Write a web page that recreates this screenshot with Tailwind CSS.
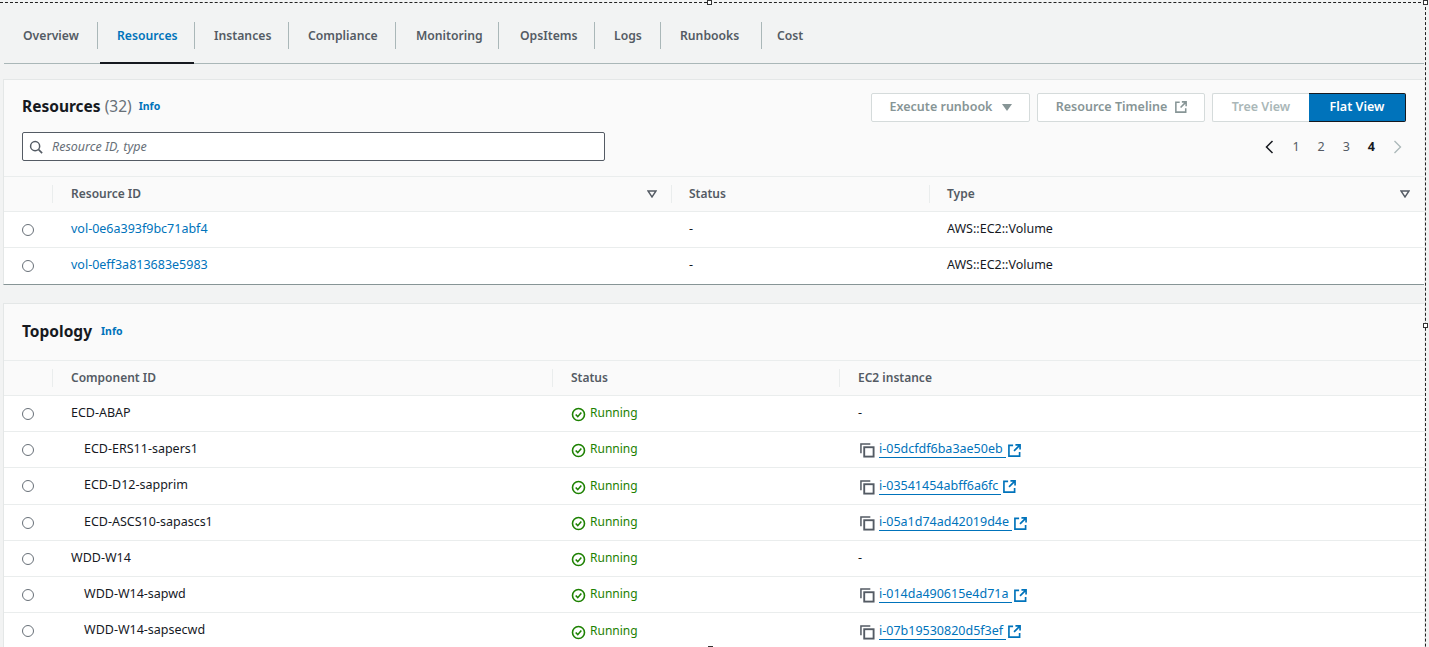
<!DOCTYPE html>
<html lang="en">
<head>
  <meta charset="UTF-8">
  <title>Application Resources</title>
  <script src="https://cdn.jsdelivr.net/npm/@tailwindcss/browser@4"></script>
</head>
<body class="bg-[#f2f3f3] font-['Noto_Sans','Open_Sans',sans-serif] text-[12.5px] text-[#16191f] overflow-hidden">
  <svg class="hidden">
    <symbol id="ok" viewBox="0 0 16 16"><circle cx="8" cy="8" r="6.4" fill="none" stroke="currentColor" stroke-width="1.7"/><path d="M5 8l2.2 2.3L11 5.9" fill="none" stroke="currentColor" stroke-width="1.7"/></symbol>
    <symbol id="copy" viewBox="0 0 16 16"><path d="M1 11V1h10" fill="none" stroke="currentColor" stroke-width="1.6"/><rect x="4.5" y="4.5" width="10" height="10" fill="none" stroke="currentColor" stroke-width="2"/></symbol>
    <symbol id="ext" viewBox="0 0 14 14"><path d="M5.5 1.5H1v11.5h11.5V8.5M8 1h5v5M13 1L6.5 7.5" fill="none" stroke="currentColor" stroke-width="1.8"/></symbol>
  </svg>

  <div class="relative h-[647px] w-[1429px] overflow-hidden">
    <!-- selection frame from the screenshot -->
    <div class="absolute left-0 top-[2px] h-[800px] w-[1426px] border-t border-r border-dashed border-[#222]"></div>
    <div class="absolute left-[707px] top-0 h-[5px] w-[5px] border border-[#333] bg-white"></div>
    <div class="absolute left-[1423px] top-0 h-[5px] w-[5px] border border-[#333] bg-white"></div>
    <div class="absolute left-[1423px] top-[323px] h-[5px] w-[5px] border border-[#333] bg-white"></div>
    <div class="absolute left-[708px] top-[646px] h-[1px] w-[5px] bg-[#333]"></div>

    <!-- tabs -->
    <div class="ml-[4px] mr-[5px] pt-[8px]">
      <div class="flex h-[56px] items-center border-b border-[#aab7b8] font-semibold text-[#545b64]">
        <div class="flex h-[55px] items-center text-[12.2px]">
          <a class="w-[94px] border-r border-[#aab7b8] pl-[19px] leading-[27px]">Overview</a>
          <a class="relative flex h-[55px] w-[96px] items-center pl-[19px] text-[#0073bb]">
            <span class="leading-[27px]">Resources</span>
            <span class="absolute bottom-[-1px] left-[2px] right-0 h-[2px] bg-[#16191f]"></span>
          </a>
          <a class="w-[95px] border-x border-[#aab7b8] pl-[19px] leading-[27px]">Instances</a>
          <a class="w-[107px] border-r border-[#aab7b8] pl-[19px] leading-[27px]">Compliance</a>
          <a class="w-[103px] border-r border-[#aab7b8] pl-[20px] leading-[27px]">Monitoring</a>
          <a class="w-[96px] border-r border-[#aab7b8] pl-[21px] leading-[27px]">OpsItems</a>
          <a class="w-[66px] border-r border-[#aab7b8] pl-[19px] leading-[27px]">Logs</a>
          <a class="w-[101px] border-r border-[#aab7b8] pl-[19px] leading-[27px]">Runbooks</a>
          <a class="pl-[15px] leading-[27px]">Cost</a>
        </div>
      </div>
    </div>

    <!-- resources card -->
    <section class="mt-[15px] ml-[3px] mr-[5px] border-l border-t border-b border-[#e4e7e7] border-b-[#879596] bg-white">
      <div class="relative h-[96px] bg-[#fafafa] pl-[18px]">
        <div class="flex h-[53px] items-center">
          <h2 class="text-[15.5px] font-bold">Resources <span class="font-normal text-[#687078]">(32)</span></h2>
          <a class="ml-[7px] text-[10.5px] font-bold text-[#0073bb]">Info</a>
        </div>
        <div class="-mt-[1px] flex h-[29px] w-[583px] items-center rounded-[2px] border border-[#545b64] bg-white pl-[6px]">
          <svg class="h-[14px] w-[14px] text-[#545b64]" viewBox="0 0 16 16"><circle cx="7" cy="7" r="5.2" fill="none" stroke="currentColor" stroke-width="1.7"/><path d="M11 11l4 4" stroke="currentColor" stroke-width="1.8"/></svg>
          <span class="ml-[9px] mt-[1px] text-[12.5px] italic text-[#687078]">Resource ID, type</span>
        </div>
        <div class="absolute right-[18px] top-[13px] flex text-[12.5px] font-semibold">
          <button class="mr-[7px] flex h-[29px] w-[159px] items-center justify-center gap-[10px] rounded-[2px] border border-[#d5dbdb] bg-white pb-[1px] pl-[1px] text-[#879596]">Execute runbook <svg class="h-[9px] w-[10px]" viewBox="0 0 10 9"><path d="M0 1h10L5 8z" fill="currentColor"/></svg></button>
          <button class="mr-[7px] flex h-[29px] w-[168px] items-center justify-center gap-[8px] rounded-[2px] border border-[#d5dbdb] bg-white pb-[1px] pl-[1px] text-[#879596]">Resource Timeline <svg class="h-[12px] w-[12px]" viewBox="0 0 14 14"><use href="#ext"/></svg></button>
          <button class="h-[29px] w-[97px] rounded-l-[2px] border border-r-0 border-[#d5dbdb] bg-white pb-[1px] text-[#aab7b8]">Tree View</button>
          <button class="h-[29px] w-[97px] rounded-r-[2px] border border-l-0 border-[#16191f] bg-[#0073bb] pb-[1px] text-white">Flat View</button>
        </div>
        <div class="absolute right-[22px] top-[58px] flex items-center gap-[18px] text-[12.5px] text-[#545b64]">
          <svg class="h-[14px] w-[9px] text-[#16191f]" viewBox="0 0 9 14"><path d="M7.5 1L1.5 7l6 6" fill="none" stroke="currentColor" stroke-width="1.5"/></svg>
          <span>1</span><span>2</span><span>3</span><span class="font-bold text-[#16191f]">4</span>
          <svg class="h-[14px] w-[9px] text-[#aab7b8]" viewBox="0 0 9 14"><path d="M1.5 1l6 6-6 6" fill="none" stroke="currentColor" stroke-width="1.3"/></svg>
        </div>
      </div>
      <div class="flex h-[36px] items-center border-y border-[#eaeded] bg-[#fafafa] text-[12px] font-semibold text-[#545b64]">
        <div class="w-[48px]"></div>
        <div class="flex h-[18px] w-[619px] items-center justify-between border-l border-[#eaeded] pl-[18px] pr-[14px]">Resource ID <svg class="h-[8px] w-[10px]" viewBox="0 0 10 8"><path d="M1 1h8L5 7z" fill="none" stroke="currentColor" stroke-width="1.4"/></svg></div>
        <div class="flex h-[18px] w-[258px] items-center border-l border-[#eaeded] pl-[17px]">Status</div>
        <div class="flex h-[18px] flex-1 items-center justify-between border-l border-[#eaeded] pl-[17px] pr-[14px]">Type <svg class="h-[8px] w-[10px]" viewBox="0 0 10 8"><path d="M1 1h8L5 7z" fill="none" stroke="currentColor" stroke-width="1.4"/></svg></div>
      </div>
      <div class="flex h-[36px] items-center border-b border-[#eaeded] pb-[1px]">
        <div class="mt-[1px] w-[48px] pl-[18px]"><span class="block h-[12px] w-[12px] rounded-full border border-[#687078] bg-white"></span></div>
        <div class="w-[619px] pl-[19px] text-[#0073bb]">vol-0e6a393f9bc71abf4</div>
        <div class="w-[258px] pl-[18px]">-</div>
        <div class="pl-[18px]">AWS::EC2::Volume</div>
      </div>
      <div class="flex h-[36px] items-center pb-[1px]">
        <div class="mt-[1px] w-[48px] pl-[18px]"><span class="block h-[12px] w-[12px] rounded-full border border-[#687078] bg-white"></span></div>
        <div class="w-[619px] pl-[19px] text-[#0073bb]">vol-0eff3a813683e5983</div>
        <div class="w-[258px] pl-[18px]">-</div>
        <div class="pl-[18px]">AWS::EC2::Volume</div>
      </div>
    </section>

    <!-- topology card -->
    <section class="mt-[18px] ml-[3px] mr-[5px] border-l border-t border-[#e4e7e7] bg-white">
      <div class="flex h-[56px] items-center bg-[#fafafa] pl-[18px]">
        <h2 class="text-[15.5px] font-bold">Topology</h2>
        <a class="ml-[9px] text-[10.5px] font-bold text-[#0073bb]">Info</a>
      </div>
      <div class="flex h-[36px] items-center border-y border-[#eaeded] bg-[#fafafa] text-[12px] font-semibold text-[#545b64]">
        <div class="w-[48px]"></div>
        <div class="flex h-[18px] w-[500px] items-center border-l border-[#eaeded] pl-[18px]">Component ID</div>
        <div class="flex h-[18px] w-[287px] items-center border-l border-[#eaeded] pl-[18px]">Status</div>
        <div class="flex h-[18px] flex-1 items-center border-l border-[#eaeded] pl-[18px]">EC2 instance</div>
      </div>

      <div class="flex h-[36px] items-center border-b border-[#eaeded] pb-[1px]">
        <div class="mt-[1px] w-[48px] pl-[18px]"><span class="block h-[12px] w-[12px] rounded-full border border-[#687078] bg-white"></span></div>
        <div class="w-[500px] pl-[19px]">ECD-ABAP</div>
        <div class="flex w-[287px] items-center gap-[4px] pl-[19px] text-[12px] text-[#1d8102]"><svg class="mt-[3px] h-[15px] w-[15px]"><use href="#ok"/></svg>Running</div>
        <div class="pl-[19px]">-</div>
      </div>
      <div class="flex h-[36px] items-center border-b border-[#eaeded] pb-[1px]">
        <div class="mt-[1px] w-[48px] pl-[18px]"><span class="block h-[12px] w-[12px] rounded-full border border-[#687078] bg-white"></span></div>
        <div class="w-[500px] pl-[32px]">ECD-ERS11-sapers1</div>
        <div class="flex w-[287px] items-center gap-[4px] pl-[19px] text-[12px] text-[#1d8102]"><svg class="mt-[3px] h-[15px] w-[15px]"><use href="#ok"/></svg>Running</div>
        <div class="flex items-center pl-[21px] text-[#0073bb]"><svg class="mr-[4px] mt-[3px] h-[15px] w-[15px] text-[#545b64]"><use href="#copy"/></svg><span class="border-b border-[#0073bb] pr-[3px] leading-[17px]">i-05dcfdf6ba3ae50eb</span><svg class="ml-[2px] mt-[2px] h-[13px] w-[13px]"><use href="#ext"/></svg></div>
      </div>
      <div class="flex h-[37px] items-center border-b border-[#eaeded] pb-[1px]">
        <div class="mt-[1px] w-[48px] pl-[18px]"><span class="block h-[12px] w-[12px] rounded-full border border-[#687078] bg-white"></span></div>
        <div class="w-[500px] pl-[32px]">ECD-D12-sapprim</div>
        <div class="flex w-[287px] items-center gap-[4px] pl-[19px] text-[12px] text-[#1d8102]"><svg class="mt-[3px] h-[15px] w-[15px]"><use href="#ok"/></svg>Running</div>
        <div class="flex items-center pl-[21px] text-[#0073bb]"><svg class="mr-[4px] mt-[3px] h-[15px] w-[15px] text-[#545b64]"><use href="#copy"/></svg><span class="border-b border-[#0073bb] pr-[3px] leading-[17px]">i-03541454abff6a6fc</span><svg class="ml-[2px] mt-[2px] h-[13px] w-[13px]"><use href="#ext"/></svg></div>
      </div>
      <div class="flex h-[36px] items-center border-b border-[#eaeded] pb-[1px]">
        <div class="mt-[1px] w-[48px] pl-[18px]"><span class="block h-[12px] w-[12px] rounded-full border border-[#687078] bg-white"></span></div>
        <div class="w-[500px] pl-[32px]">ECD-ASCS10-sapascs1</div>
        <div class="flex w-[287px] items-center gap-[4px] pl-[19px] text-[12px] text-[#1d8102]"><svg class="mt-[3px] h-[15px] w-[15px]"><use href="#ok"/></svg>Running</div>
        <div class="flex items-center pl-[21px] text-[#0073bb]"><svg class="mr-[4px] mt-[3px] h-[15px] w-[15px] text-[#545b64]"><use href="#copy"/></svg><span class="border-b border-[#0073bb] pr-[3px] leading-[17px]">i-05a1d74ad42019d4e</span><svg class="ml-[2px] mt-[2px] h-[13px] w-[13px]"><use href="#ext"/></svg></div>
      </div>
      <div class="flex h-[36px] items-center border-b border-[#eaeded] pb-[1px]">
        <div class="mt-[1px] w-[48px] pl-[18px]"><span class="block h-[12px] w-[12px] rounded-full border border-[#687078] bg-white"></span></div>
        <div class="w-[500px] pl-[19px]">WDD-W14</div>
        <div class="flex w-[287px] items-center gap-[4px] pl-[19px] text-[12px] text-[#1d8102]"><svg class="mt-[3px] h-[15px] w-[15px]"><use href="#ok"/></svg>Running</div>
        <div class="pl-[19px]">-</div>
      </div>
      <div class="flex h-[36px] items-center border-b border-[#eaeded] pb-[1px]">
        <div class="mt-[1px] w-[48px] pl-[18px]"><span class="block h-[12px] w-[12px] rounded-full border border-[#687078] bg-white"></span></div>
        <div class="w-[500px] pl-[32px]">WDD-W14-sapwd</div>
        <div class="flex w-[287px] items-center gap-[4px] pl-[19px] text-[12px] text-[#1d8102]"><svg class="mt-[3px] h-[15px] w-[15px]"><use href="#ok"/></svg>Running</div>
        <div class="flex items-center pl-[21px] text-[#0073bb]"><svg class="mr-[4px] mt-[3px] h-[15px] w-[15px] text-[#545b64]"><use href="#copy"/></svg><span class="border-b border-[#0073bb] pr-[3px] leading-[17px]">i-014da490615e4d71a</span><svg class="ml-[2px] mt-[2px] h-[13px] w-[13px]"><use href="#ext"/></svg></div>
      </div>
      <div class="flex h-[36px] items-center pb-[1px]">
        <div class="mt-[1px] w-[48px] pl-[18px]"><span class="block h-[12px] w-[12px] rounded-full border border-[#687078] bg-white"></span></div>
        <div class="w-[500px] pl-[32px]">WDD-W14-sapsecwd</div>
        <div class="flex w-[287px] items-center gap-[4px] pl-[19px] text-[12px] text-[#1d8102]"><svg class="mt-[3px] h-[15px] w-[15px]"><use href="#ok"/></svg>Running</div>
        <div class="flex items-center pl-[21px] text-[#0073bb]"><svg class="mr-[4px] mt-[3px] h-[15px] w-[15px] text-[#545b64]"><use href="#copy"/></svg><span class="border-b border-[#0073bb] pr-[3px] leading-[17px]">i-07b19530820d5f3ef</span><svg class="ml-[2px] mt-[2px] h-[13px] w-[13px]"><use href="#ext"/></svg></div>
      </div>
    </section>
  </div>
</body>
</html>
